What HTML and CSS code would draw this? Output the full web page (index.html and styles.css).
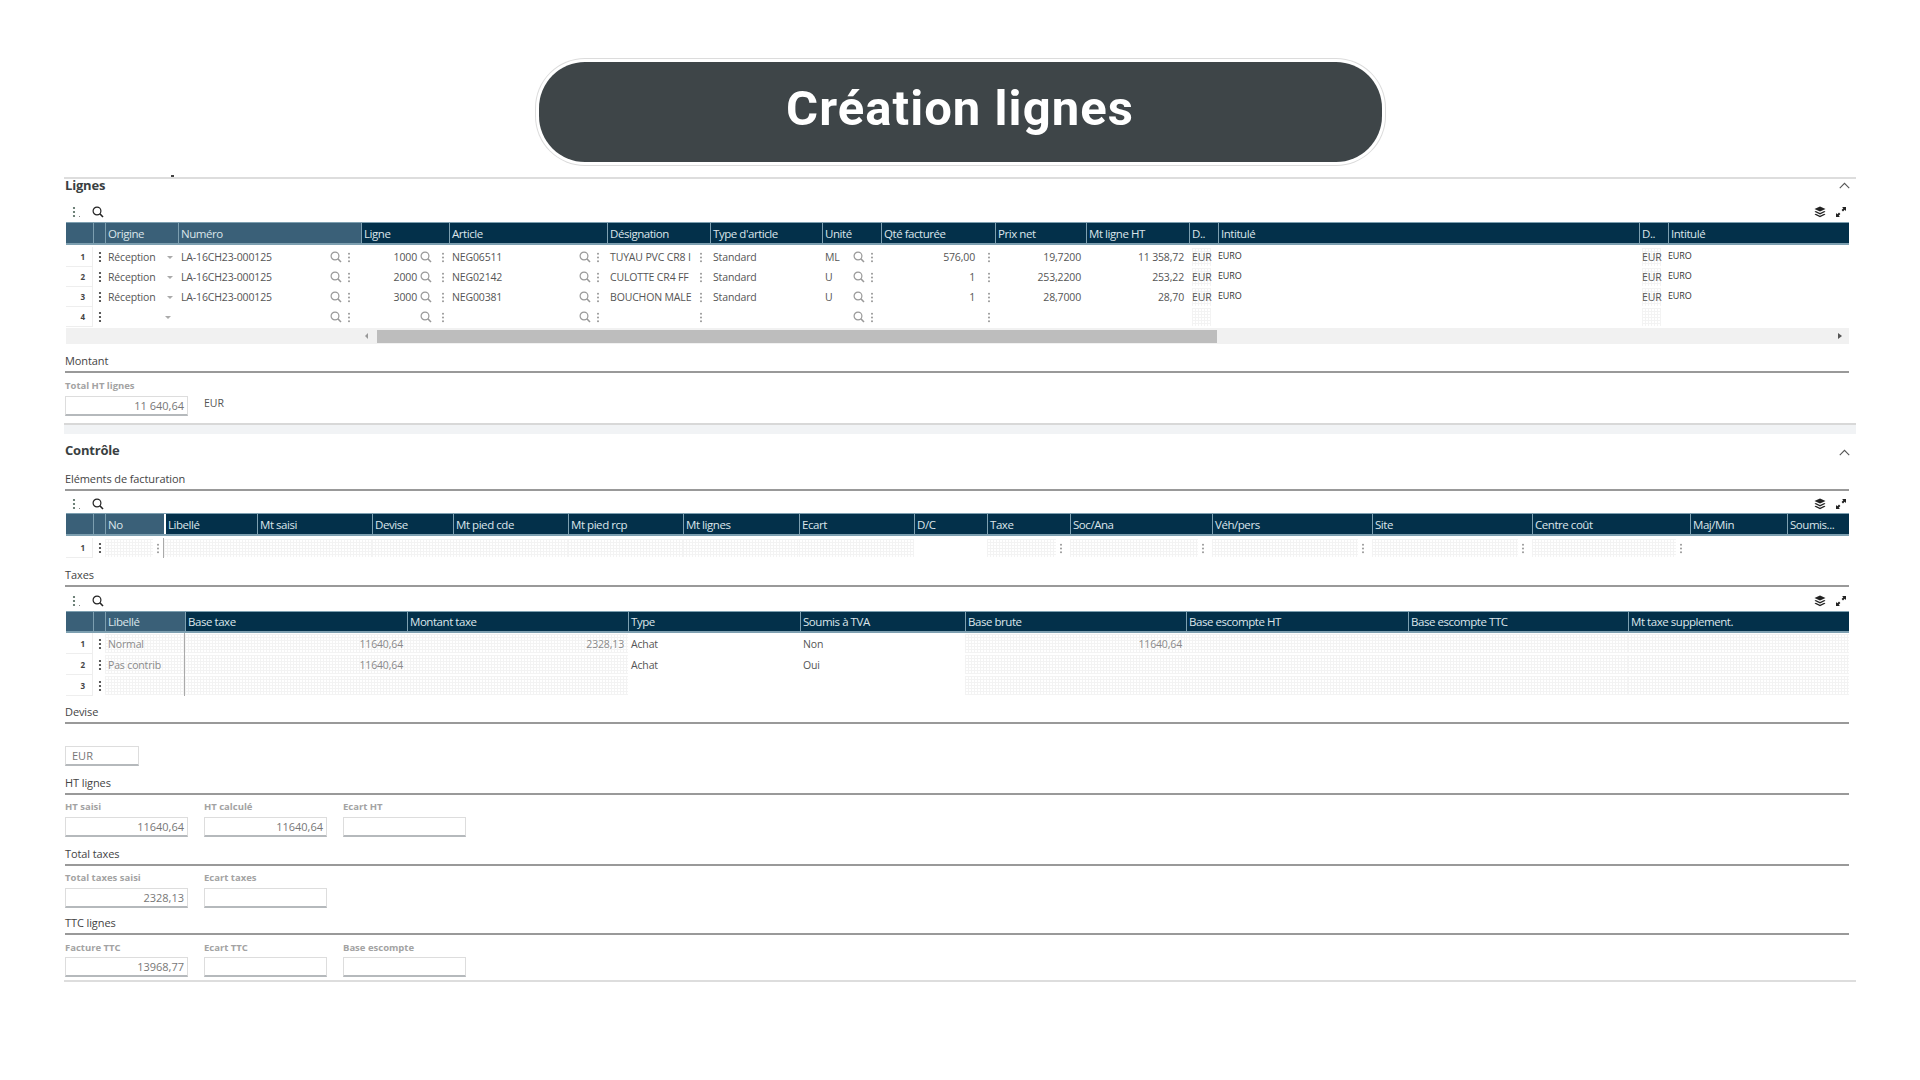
FILE: index.html
```html
<!DOCTYPE html>
<html lang="fr">
<head>
    <meta charset="UTF-8">
    <title>Création lignes</title>
    <link rel="stylesheet" href="styles.css">
</head>
<body>
    <svg class="defs" width="0" height="0">
        <symbol id="i-search" viewBox="0 0 12 12">
            <circle cx="5" cy="5" r="3.9" fill="none" stroke="currentColor" stroke-width="1.2"/>
            <path d="M7.8 7.8 11 11" fill="none" stroke="currentColor" stroke-width="1.6"/>
        </symbol>
        <symbol id="i-dots" viewBox="0 0 4 12">
            <circle cx="2" cy="2" r="1.1" fill="currentColor"/>
            <circle cx="2" cy="6" r="1.1" fill="currentColor"/>
            <circle cx="2" cy="10" r="1.1" fill="currentColor"/>
        </symbol>
        <symbol id="i-layers" viewBox="0 0 12 12">
            <path d="M6 .5 11.5 3 6 5.5.5 3z" fill="currentColor"/>
            <path d="M1.8 5 6 7 10.2 5l1.3.8L6 8.4.5 5.800z" fill="currentColor"/>
            <path d="M1.8 7.700 6 9.700l4.200-2 1.300.8L6 11.300.5 8.500z" fill="currentColor"/>
        </symbol>
        <symbol id="i-expand" viewBox="0 0 12 12">
            <path d="M7 1h4v4L9.700 3.700 8 5.400 6.600 4 8.300 2.300z" fill="currentColor"/>
            <path d="M1 7v4h4L3.700 9.700 5.400 8 4 6.600 2.300 8.300z" fill="currentColor"/>
        </symbol>
        <symbol id="i-up" viewBox="0 0 10 6">
            <path d="M.7 5.300 5 1l4.300 4.300" fill="none" stroke="currentColor" stroke-width="1"/>
        </symbol>
    </svg>

    <div class="banner">
        <h1 class="pill">Création lignes</h1>
    </div>

    <main class="page">
        <section class="panel panel-first">
            <span class="stray"></span>
            <div class="panel-head">
                <h2>Lignes</h2>
                <svg class="ic chevron"><use href="#i-up"/></svg>
            </div>
            <div class="toolbar">
                <svg class="ic tb-dots"><use href="#i-dots"/></svg><i class="tb-dot"></i>
                <svg class="ic tb-search"><use href="#i-search"/></svg>
                <svg class="ic tb-layers"><use href="#i-layers"/></svg>
                <svg class="ic tb-expand"><use href="#i-expand"/></svg>
            </div>

            <div class="grid grid-lignes head">
                <div class="hc fixed"></div><div class="hc fixed"></div><div class="hc fixed">Origine</div><div class="hc fixed">Numéro</div>
                <div class="hc">Ligne</div><div class="hc">Article</div><div class="hc">Désignation</div><div class="hc">Type d'article</div>
                <div class="hc">Unité</div><div class="hc">Qté facturée</div><div class="hc">Prix net</div><div class="hc">Mt ligne HT</div>
                <div class="hc">D..</div><div class="hc">Intitulé</div><div class="hc">D..</div><div class="hc">Intitulé</div>
            </div>
            <div class="rows rows-lignes">
                <div class="grid grid-lignes row">
                    <div class="c idx">1</div><div class="c"><svg class="ic handle"><use href="#i-dots"/></svg></div>
                    <div class="c">Réception<i class="caret"></i></div>
                    <div class="c c-wide split">LA-16CH23-000125<span class="tools"><svg class="ic search"><use href="#i-search"/></svg><svg class="ic dots"><use href="#i-dots"/></svg></span></div>
                    <div class="c tight num">1000<span class="tools after"><svg class="ic search"><use href="#i-search"/></svg><svg class="ic dots"><use href="#i-dots"/></svg></span></div>
                    <div class="c split">NEG06511<span class="tools"><svg class="ic search"><use href="#i-search"/></svg><svg class="ic dots"><use href="#i-dots"/></svg></span></div>
                    <div class="c split"><span>TUYAU PVC CR8 I</span><svg class="ic dots"><use href="#i-dots"/></svg></div>
                    <div class="c">Standard</div>
                    <div class="c split">ML<span class="tools"><svg class="ic search"><use href="#i-search"/></svg><svg class="ic dots"><use href="#i-dots"/></svg></span></div>
                    <div class="c tight num">576,00<svg class="ic dots after"><use href="#i-dots"/></svg></div>
                    <div class="c num">19,7200</div><div class="c num">11 358,72</div>
                    <div class="c"><span class="fill">EUR</span></div><div class="c euro">EURO</div>
                    <div class="c"><span class="fill">EUR</span></div><div class="c euro">EURO</div>
                </div>
                <div class="grid grid-lignes row">
                    <div class="c idx">2</div><div class="c"><svg class="ic handle"><use href="#i-dots"/></svg></div>
                    <div class="c">Réception<i class="caret"></i></div>
                    <div class="c c-wide split">LA-16CH23-000125<span class="tools"><svg class="ic search"><use href="#i-search"/></svg><svg class="ic dots"><use href="#i-dots"/></svg></span></div>
                    <div class="c tight num">2000<span class="tools after"><svg class="ic search"><use href="#i-search"/></svg><svg class="ic dots"><use href="#i-dots"/></svg></span></div>
                    <div class="c split">NEG02142<span class="tools"><svg class="ic search"><use href="#i-search"/></svg><svg class="ic dots"><use href="#i-dots"/></svg></span></div>
                    <div class="c split"><span>CULOTTE CR4 FF</span><svg class="ic dots"><use href="#i-dots"/></svg></div>
                    <div class="c">Standard</div>
                    <div class="c split">U<span class="tools"><svg class="ic search"><use href="#i-search"/></svg><svg class="ic dots"><use href="#i-dots"/></svg></span></div>
                    <div class="c tight num">1<svg class="ic dots after"><use href="#i-dots"/></svg></div>
                    <div class="c num">253,2200</div><div class="c num">253,22</div>
                    <div class="c"><span class="fill">EUR</span></div><div class="c euro">EURO</div>
                    <div class="c"><span class="fill">EUR</span></div><div class="c euro">EURO</div>
                </div>
                <div class="grid grid-lignes row">
                    <div class="c idx">3</div><div class="c"><svg class="ic handle"><use href="#i-dots"/></svg></div>
                    <div class="c">Réception<i class="caret"></i></div>
                    <div class="c c-wide split">LA-16CH23-000125<span class="tools"><svg class="ic search"><use href="#i-search"/></svg><svg class="ic dots"><use href="#i-dots"/></svg></span></div>
                    <div class="c tight num">3000<span class="tools after"><svg class="ic search"><use href="#i-search"/></svg><svg class="ic dots"><use href="#i-dots"/></svg></span></div>
                    <div class="c split">NEG00381<span class="tools"><svg class="ic search"><use href="#i-search"/></svg><svg class="ic dots"><use href="#i-dots"/></svg></span></div>
                    <div class="c split"><span>BOUCHON MALE</span><svg class="ic dots"><use href="#i-dots"/></svg></div>
                    <div class="c">Standard</div>
                    <div class="c split">U<span class="tools"><svg class="ic search"><use href="#i-search"/></svg><svg class="ic dots"><use href="#i-dots"/></svg></span></div>
                    <div class="c tight num">1<svg class="ic dots after"><use href="#i-dots"/></svg></div>
                    <div class="c num">28,7000</div><div class="c num">28,70</div>
                    <div class="c"><span class="fill">EUR</span></div><div class="c euro">EURO</div>
                    <div class="c"><span class="fill">EUR</span></div><div class="c euro">EURO</div>
                </div>
                <div class="grid grid-lignes row">
                    <div class="c idx">4</div><div class="c"><svg class="ic handle"><use href="#i-dots"/></svg></div>
                    <div class="c"><i class="caret caret-empty"></i></div>
                    <div class="c c-wide split"><span></span><span class="tools"><svg class="ic search"><use href="#i-search"/></svg><svg class="ic dots"><use href="#i-dots"/></svg></span></div>
                    <div class="c tight num"><span class="tools after"><svg class="ic search"><use href="#i-search"/></svg><svg class="ic dots"><use href="#i-dots"/></svg></span></div>
                    <div class="c split"><span></span><span class="tools"><svg class="ic search"><use href="#i-search"/></svg><svg class="ic dots"><use href="#i-dots"/></svg></span></div>
                    <div class="c split"><span></span><svg class="ic dots"><use href="#i-dots"/></svg></div>
                    <div class="c"></div>
                    <div class="c split"><span></span><span class="tools"><svg class="ic search"><use href="#i-search"/></svg><svg class="ic dots"><use href="#i-dots"/></svg></span></div>
                    <div class="c tight num"><svg class="ic dots after"><use href="#i-dots"/></svg></div>
                    <div class="c"></div><div class="c"></div>
                    <div class="c"><span class="fill"></span></div><div class="c"></div>
                    <div class="c"><span class="fill"></span></div><div class="c"></div>
                </div>
            </div>
            <div class="scrollbar">
                <i class="arrow arrow-left"></i>
                <div class="thumb"></div>
                <i class="arrow arrow-right"></i>
            </div>

            <h3 class="subhead sh-montant">Montant</h3>
            <div class="fields fields-first">
                <div class="field">
                    <label>Total HT lignes</label>
                    <div class="input">11 640,64</div>
                </div>
                <span class="unit">EUR</span>
            </div>
        </section>

        <div class="band"></div>

        <section class="panel">
            <div class="panel-head head-controle">
                <h2>Contrôle</h2>
                <svg class="ic chevron"><use href="#i-up"/></svg>
            </div>

            <h3 class="subhead">Eléments de facturation</h3>
            <div class="toolbar tb-tight">
                <svg class="ic tb-dots"><use href="#i-dots"/></svg><i class="tb-dot"></i>
                <svg class="ic tb-search"><use href="#i-search"/></svg>
                <svg class="ic tb-layers"><use href="#i-layers"/></svg>
                <svg class="ic tb-expand"><use href="#i-expand"/></svg>
            </div>
            <div class="grid grid-elements head">
                <div class="hc fixed"></div><div class="hc fixed"></div><div class="hc fixed">No</div>
                <div class="hc hc-gap">Libellé</div><div class="hc">Mt saisi</div><div class="hc">Devise</div><div class="hc">Mt pied cde</div><div class="hc">Mt pied rcp</div>
                <div class="hc">Mt lignes</div><div class="hc">Ecart</div><div class="hc">D/C</div><div class="hc">Taxe</div><div class="hc">Soc/Ana</div>
                <div class="hc">Véh/pers</div><div class="hc">Site</div><div class="hc">Centre coût</div><div class="hc">Maj/Min</div><div class="hc">Soumis...</div>
            </div>
            <div class="rows rows-elements">
                <div class="grid grid-elements row">
                    <div class="c idx">1</div><div class="c"><svg class="ic handle"><use href="#i-dots"/></svg></div>
                    <div class="c c-line bare"><span class="fill"></span><svg class="ic dots gap"><use href="#i-dots"/></svg></div>
                    <div class="c bare"><span class="fill"></span></div><div class="c bare"><span class="fill"></span></div><div class="c bare"><span class="fill"></span></div>
                    <div class="c bare"><span class="fill"></span></div><div class="c bare"><span class="fill"></span></div><div class="c bare"><span class="fill"></span></div>
                    <div class="c bare"><span class="fill"></span></div><div class="c"></div>
                    <div class="c bare"><span class="fill"></span><svg class="ic dots gap"><use href="#i-dots"/></svg></div>
                    <div class="c bare"><span class="fill"></span><svg class="ic dots gap"><use href="#i-dots"/></svg></div>
                    <div class="c bare"><span class="fill"></span><svg class="ic dots gap"><use href="#i-dots"/></svg></div>
                    <div class="c bare"><span class="fill"></span><svg class="ic dots gap"><use href="#i-dots"/></svg></div>
                    <div class="c bare"><span class="fill"></span><svg class="ic dots gap"><use href="#i-dots"/></svg></div>
                    <div class="c"></div><div class="c"></div>
                </div>
            </div>

            <h3 class="subhead sh-taxes">Taxes</h3>
            <div class="toolbar tb-taxes">
                <svg class="ic tb-dots"><use href="#i-dots"/></svg><i class="tb-dot"></i>
                <svg class="ic tb-search"><use href="#i-search"/></svg>
                <svg class="ic tb-layers"><use href="#i-layers"/></svg>
                <svg class="ic tb-expand"><use href="#i-expand"/></svg>
            </div>
            <div class="grid grid-taxes head head-taxes">
                <div class="hc fixed"></div><div class="hc fixed"></div><div class="hc fixed">Libellé</div>
                <div class="hc">Base taxe</div><div class="hc">Montant taxe</div><div class="hc">Type</div><div class="hc">Soumis à TVA</div>
                <div class="hc">Base brute</div><div class="hc">Base escompte HT</div><div class="hc">Base escompte TTC</div><div class="hc">Mt taxe supplement.</div>
            </div>
            <div class="rows-taxes">
                <div class="grid grid-taxes row row-taxes">
                    <div class="c idx">1</div><div class="c"><svg class="ic handle"><use href="#i-dots"/></svg></div>
                    <div class="c c-line bare"><span class="fill muted">Normal</span></div>
                    <div class="c bare"><span class="fill muted right">11640,64</span></div>
                    <div class="c bare"><span class="fill muted right">2328,13</span></div>
                    <div class="c">Achat</div><div class="c">Non</div>
                    <div class="c bare"><span class="fill muted right">11640,64</span></div>
                    <div class="c bare"><span class="fill"></span></div><div class="c bare"><span class="fill"></span></div><div class="c bare"><span class="fill"></span></div>
                </div>
                <div class="grid grid-taxes row row-taxes">
                    <div class="c idx">2</div><div class="c"><svg class="ic handle"><use href="#i-dots"/></svg></div>
                    <div class="c c-line bare"><span class="fill muted">Pas contrib</span></div>
                    <div class="c bare"><span class="fill muted right">11640,64</span></div>
                    <div class="c bare"><span class="fill"></span></div>
                    <div class="c">Achat</div><div class="c">Oui</div>
                    <div class="c bare"><span class="fill"></span></div>
                    <div class="c bare"><span class="fill"></span></div><div class="c bare"><span class="fill"></span></div><div class="c bare"><span class="fill"></span></div>
                </div>
                <div class="grid grid-taxes row row-taxes">
                    <div class="c idx">3</div><div class="c"><svg class="ic handle"><use href="#i-dots"/></svg></div>
                    <div class="c c-line bare"><span class="fill"></span></div>
                    <div class="c bare"><span class="fill"></span></div>
                    <div class="c bare"><span class="fill"></span></div>
                    <div class="c"></div><div class="c"></div>
                    <div class="c bare"><span class="fill"></span></div>
                    <div class="c bare"><span class="fill"></span></div><div class="c bare"><span class="fill"></span></div><div class="c bare"><span class="fill"></span></div>
                </div>
            </div>

            <h3 class="subhead sh-devise">Devise</h3>
            <div class="input input-short">EUR</div>

            <h3 class="subhead sh-next">HT lignes</h3>
            <div class="fields">
                <div class="field"><label>HT saisi</label><div class="input">11640,64</div></div>
                <div class="field"><label>HT calculé</label><div class="input">11640,64</div></div>
                <div class="field"><label>Ecart HT</label><div class="input"></div></div>
            </div>

            <h3 class="subhead sh-next">Total taxes</h3>
            <div class="fields">
                <div class="field"><label>Total taxes saisi</label><div class="input">2328,13</div></div>
                <div class="field"><label>Ecart taxes</label><div class="input"></div></div>
            </div>

            <h3 class="subhead sh-ttc">TTC lignes</h3>
            <div class="fields fields-ttc">
                <div class="field"><label>Facture TTC</label><div class="input">13968,77</div></div>
                <div class="field"><label>Ecart TTC</label><div class="input"></div></div>
                <div class="field"><label>Base escompte</label><div class="input"></div></div>
            </div>
        </section>
        <div class="closing"></div>
    </main>
</body>
</html>
```

FILE: styles.css
```css
body {
    margin: 0;
    height: 1080px;
    overflow: hidden;
    background-color: #fff;
    color: #555;
    font-family: "Open Sans", Arial, sans-serif;
    font-size: 11px;
}
.defs {
    display: block;
    height: 0;
}
.ic {
    display: block;
    flex: none;
}

/* title */
.banner {
    display: flex;
    justify-content: center;
    padding-top: 62px;
    margin-bottom: 15px;
}
.pill {
    width: 843px;
    height: 100px;
    box-sizing: border-box;
    margin: 0;
    padding-bottom: 7px;
    display: flex;
    align-items: center;
    justify-content: center;
    background-color: #3e4548;
    color: #fff;
    border-radius: 46px;
    box-shadow: 0 0 0 3px #fff, 0 0 0 4px #dcdcdc;
    font-family: Roboto, Arial, sans-serif;
    font-size: 49px;
    font-weight: 700;
    letter-spacing: 1.05px;
}

.page {
    margin: 0 64px;
}
.panel {
    position: relative;
    padding: 0 7px 0 1px;
}
.panel-first {
    border-top: 2px solid #ddd;
}
.stray {
    position: absolute;
    left: 107px;
    top: -4px;
    width: 3px;
    height: 2px;
    background-color: #444;
}
.panel-head {
    display: flex;
    justify-content: space-between;
    height: 22px;
}
.panel-head h2 {
    margin: -1px 0 0 0;
    font-size: 13px;
    line-height: 14px;
    font-weight: 700;
    color: #3a3f42;
    letter-spacing: -0.2px;
}
.head-controle {
    height: 38px;
    padding-top: 10px;
    box-sizing: border-box;
}
.chevron {
    width: 11px;
    height: 7px;
    margin: 3px -1px 0 0;
    color: #555;
}
.head-controle .chevron {
    margin-top: 5px;
}

/* toolbar above each grid */
.toolbar {
    display: flex;
    align-items: center;
    height: 21px;
    color: #222;
}
.tb-tight {
    margin-top: 2px;
    margin-bottom: -1px;
}
.tb-taxes {
    margin-top: 3px;
}
.tb-dots {
    width: 4px;
    height: 12px;
    margin-left: 7px;
    color: #4b6358;
}
.tb-dot {
    width: 1px;
    height: 1px;
    margin: 9px 0 0 3px;
    background-color: #888;
}
.tb-search {
    width: 12px;
    height: 12px;
    margin-left: 12px;
}
.tb-layers {
    width: 12px;
    height: 12px;
    margin-left: auto;
    margin-right: 9px;
}
.tb-expand {
    width: 12px;
    height: 12px;
    margin-right: 2px;
}

/* data grids */
.grid {
    display: grid;
    margin-left: 1px;
}
.grid-lignes {
    grid-template-columns: 27px 12px 73px 183px 88px 158px 103px 112px 59px 114px 91px 103px 29px 421px 29px 1fr;
}
.grid-elements {
    grid-template-columns: 27px 12px 59px 93px 115px 81px 115px 115px 116px 115px 73px 83px 142px 160px 160px 158px 97px 1fr;
}
.grid-taxes {
    grid-template-columns: 27px 12px 80px 222px 221px 172px 165px 221px 222px 220px 1fr;
}
.head {
    height: 23px;
    box-sizing: border-box;
    background-color: #03304a;
    border-top: 1px solid #7d9fb0;
    border-bottom: 2px solid #7d9fb0;
}
.head-taxes {
    height: 22px;
}
.hc {
    display: flex;
    align-items: center;
    padding-left: 2px;
    border-left: 1px solid #7d9fb0;
    color: #dbe5ea;
    font-size: 11.5px;
    letter-spacing: -0.45px;
    white-space: nowrap;
    overflow: hidden;
}
.hc.fixed {
    background-color: #3a6078;
}
.hc:first-child {
    border-left: 0;
}
.hc-gap {
    border-left: 2px solid #fff;
}
.rows-lignes {
    padding-top: 2px;
    padding-bottom: 1px;
}
.rows-elements {
    padding-top: 2px;
}
.row {
    height: 20px;
}
.row-taxes {
    height: 21px;
}
.c {
    display: flex;
    align-items: center;
    min-width: 0;
    padding: 0 7px 0 3px;
    font-size: 10.5px;
    letter-spacing: -0.15px;
    white-space: nowrap;
}
.c.bare {
    padding: 0;
}
.split {
    justify-content: space-between;
}
.num {
    justify-content: flex-end;
    padding-right: 5px;
}
.tight {
    padding-right: 4px;
}
.c-wide {
    padding-right: 10px;
}
.c-line {
    border-right: 1px solid #aaa;
}
.idx {
    justify-content: flex-end;
    padding: 0 7px 0 0;
    border-right: 1px solid #eee;
    border-bottom: 1px solid #eee;
    color: #444;
    font-size: 8px;
    font-weight: 700;
}
.handle {
    width: 4px;
    height: 12px;
    margin-left: 2px;
    color: #333;
}
.tools {
    display: flex;
    align-items: center;
    gap: 5px;
}
.tools.after {
    margin-left: 3px;
    gap: 9px;
}
.search {
    width: 12px;
    height: 12px;
    color: #999;
}
.dots {
    width: 4px;
    height: 11px;
    color: #999;
}
.dots.after {
    margin-left: 12px;
}
.dots.gap {
    margin: 0 7px 0 3px;
}
.c-line .dots.gap {
    margin-right: 3px;
}
.caret {
    margin-left: 11px;
    border-left: 3px solid transparent;
    border-right: 3px solid transparent;
    border-top: 3px solid #aaa;
}
.caret-empty {
    margin-left: 57px;
}
.euro {
    padding-left: 0;
    padding-bottom: 3px;
    color: #333;
    font-size: 9px;
}

/* read-only cells get the dotted background */
.fill {
    flex: 1;
    min-width: 0;
    align-self: stretch;
    margin: 1px 0;
    display: flex;
    align-items: center;
    padding: 0 4px 0 0;
    background-image: linear-gradient(#f3f3f3 1px, transparent 1px), linear-gradient(90deg, #f3f3f3 1px, transparent 1px);
    background-size: 3px 3px;
}
.muted {
    color: #8a8a8a;
    padding-left: 3px;
}
.right {
    justify-content: flex-end;
}

.scrollbar {
    display: flex;
    align-items: center;
    height: 16px;
    margin-left: 1px;
    background-color: #f1f1f1;
}
.arrow {
    width: 0;
    height: 0;
    border-top: 3px solid transparent;
    border-bottom: 3px solid transparent;
}
.arrow-left {
    margin-left: 299px;
    border-right: 3px solid #999;
}
.thumb {
    width: 840px;
    height: 13px;
    margin-left: 9px;
    background-color: #bdbdbd;
}
.arrow-right {
    margin-left: auto;
    margin-right: 7px;
    border-left: 4px solid #555;
}

/* subsection titles and fields */
.subhead {
    margin: 0;
    height: 17px;
    border-bottom: 2px solid #999;
    font-size: 11px;
    line-height: 14px;
    font-weight: 400;
    color: #444;
    letter-spacing: -0.1px;
}
.sh-montant {
    margin-top: 10px;
}
.sh-taxes {
    margin-top: 10px;
}
.sh-devise {
    margin-top: 9px;
}
.sh-next {
    margin-top: 10px;
}
.sh-ttc {
    margin-top: 8px;
}
.fields {
    display: flex;
    gap: 16px;
    margin-top: 6px;
}
.fields-first {
    margin-top: 7px;
}
.fields-ttc {
    margin-top: 7px;
}
.field {
    width: 123px;
}
.field label {
    display: block;
    height: 12px;
    margin-bottom: 4px;
    font-size: 9.5px;
    line-height: 12px;
    font-weight: 700;
    color: #a3a3a3;
}
.fields-ttc .field label {
    margin-bottom: 3px;
}
.input {
    height: 20px;
    box-sizing: border-box;
    padding-right: 3px;
    border: 1px solid #ddd;
    border-bottom: 2px solid #b5b9bc;
    font-size: 11px;
    line-height: 18px;
    text-align: right;
    color: #777;
}
.input-short {
    width: 74px;
    height: 20px;
    margin-top: 22px;
    padding-left: 6px;
    text-align: left;
}
.unit {
    margin: 16px 0 0 0;
    line-height: 14px;
    font-size: 10.5px;
    color: #555;
}
.band {
    margin-top: 7px;
    height: 9px;
    background-color: #f1f3f5;
    border-top: 2px solid #d8d8d8;
}
.closing {
    margin-top: 3px;
    height: 2px;
    background-color: #ddd;
}
```
